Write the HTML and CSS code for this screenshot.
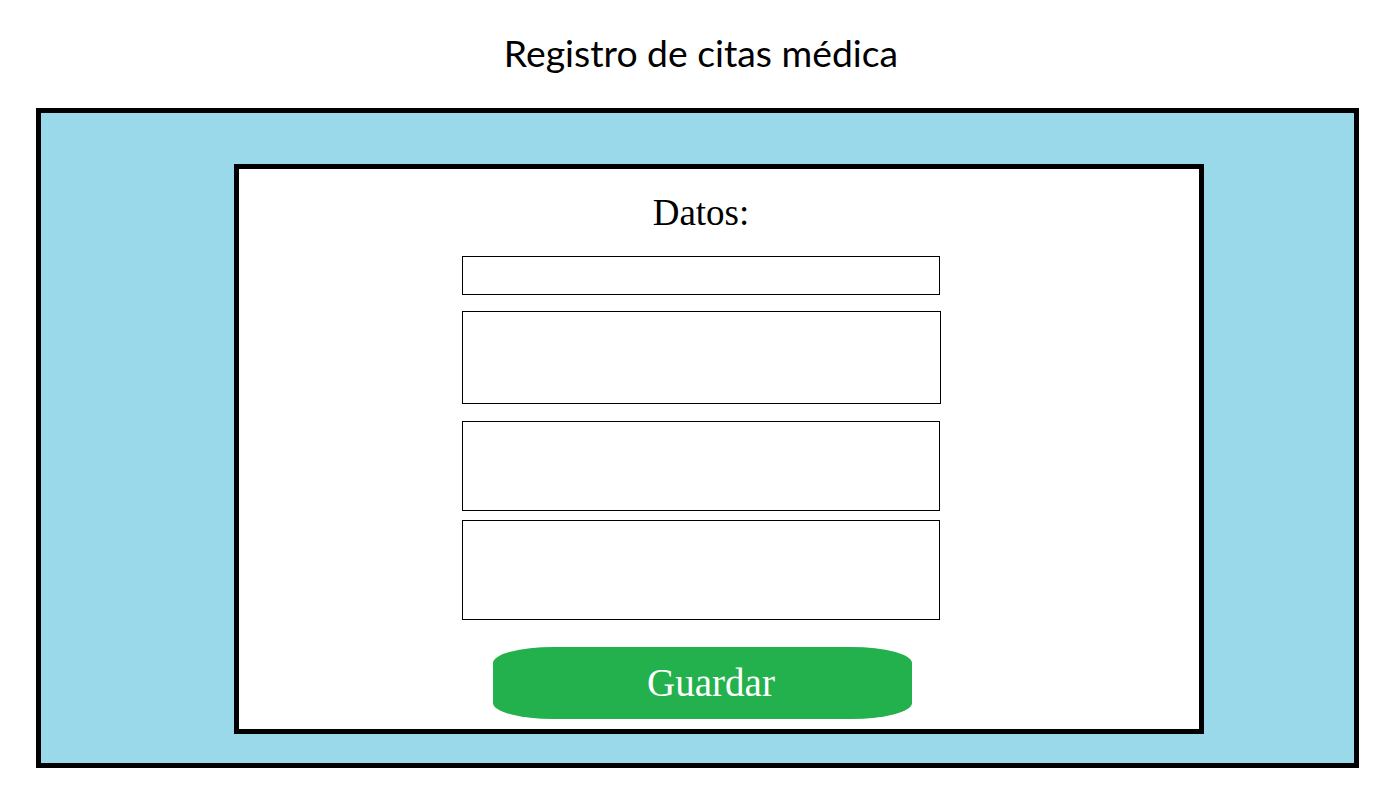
FILE: index.html
```html
<!DOCTYPE html>
<html lang="es">
<head>
<meta charset="utf-8">
<title>Registro de citas médica</title>
<link rel="stylesheet" href="styles.css">
</head>
<body>
<header class="page-header">
  <h1 class="page-title">Registro de citas médica</h1>
</header>
<main class="outer-box">
  <section class="form-card">
    <form class="form-column">
      <h2 class="form-title">Datos:</h2>
      <input class="field field-short" type="text">
      <textarea class="field field-a"></textarea>
      <textarea class="field field-b"></textarea>
      <textarea class="field field-c"></textarea>
      <button class="save-btn" type="button">Guardar</button>
    </form>
  </section>
</main>
</body>
</html>
```
FILE: styles.css
```css
* { box-sizing: border-box; }
html, body {
  margin: 0;
  padding: 0;
  background: #fff;
}
.page-header {
  height: 108px;
  padding-top: 32px;
  padding-left: 7px;
  text-align: center;
}
.page-title {
  margin: 0;
  font-family: "Lato", "Open Sans", sans-serif;
  font-weight: 400;
  font-size: 37.3px;
  line-height: 42px;
  color: #000;
}
.outer-box {
  display: flex;
  margin: 0 36px;
  height: 660px;
  border: 5px solid #000;
  background: #99d9ea;
  padding: 51px 150px 29px 193px;
}
.form-card {
  flex: 1;
  background: #fff;
  border: 5px solid #000;
  padding: 24px 259px 0 223px;
}
.form-column {
  display: flex;
  flex-direction: column;
  width: 478px;
}
.form-title {
  margin: 0 0 23px;
  text-align: center;
  font-family: "Liberation Serif", serif;
  font-weight: 400;
  font-size: 37px;
  line-height: 40px;
  color: #000;
}
.field {
  display: block;
  width: 478px;
  margin: 0;
  padding: 0;
  border: 1px solid #000;
  border-radius: 0;
  background: #fff;
  resize: none;
  outline: none;
  font: inherit;
}
.field-short { height: 39px; }
.field-a { height: 93px; width: 479px; margin-top: 16px; }
.field-b { height: 90px; margin-top: 17px; }
.field-c { height: 100px; margin-top: 9px; }
.save-btn {
  margin: 27px 0 0 31px;
  width: 419px;
  height: 72px;
  border: none;
  border-radius: 60px / 16px;
  background: #22b14c;
  color: #fff;
  font-family: "Liberation Serif", serif;
  font-size: 39px;
  padding: 0 0 0 17px;
  line-height: 72px;
  cursor: pointer;
}
```
